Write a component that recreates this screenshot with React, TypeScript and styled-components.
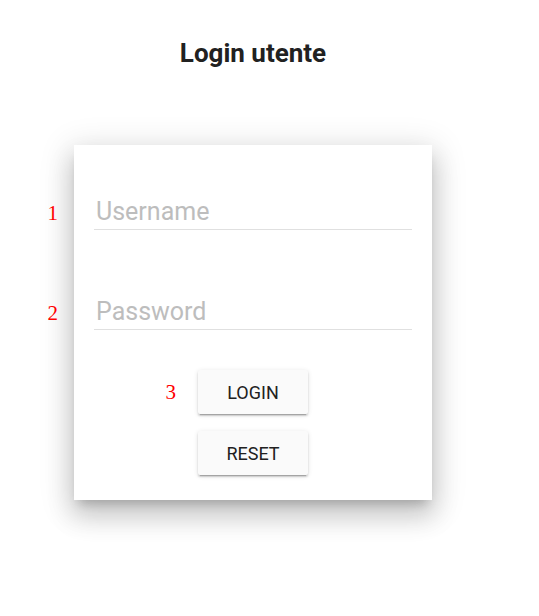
import React from "react";
import styled, { createGlobalStyle } from "styled-components";

const GlobalStyle = createGlobalStyle`
  html, body {
    margin: 0;
    background: #ffffff;
    font-family: Roboto, "Helvetica Neue", Arial, sans-serif;
  }
`;

export default function App() {
  return (
    <>
      <GlobalStyle />
      <Page>
        <Title>Login utente</Title>
        <Card>
          <Field>
            <Marker $gap={36}>1</Marker>
            <TextInput type="text" placeholder="Username" />
          </Field>
          <Field>
            <Marker $gap={36}>2</Marker>
            <TextInput type="password" placeholder="Password" />
          </Field>
          <Actions>
            <ButtonSlot>
              <Marker $gap={22}>3</Marker>
              <RaisedButton>LOGIN</RaisedButton>
            </ButtonSlot>
            <ButtonSlot>
              <RaisedButton>RESET</RaisedButton>
            </ButtonSlot>
          </Actions>
        </Card>
      </Page>
    </>
  );
}

const Page = styled.div`
  width: 506px;
  min-height: 616px;
  box-sizing: border-box;
  padding: 38px 0 80px;
  display: flex;
  flex-direction: column;
  align-items: center;
`;

const Title = styled.h2`
  margin: 0;
  font-size: 26px;
  line-height: 30px;
  font-weight: 700;
  color: #212121;
`;

const Card = styled.div`
  margin-top: 77px;
  width: 358px;
  box-sizing: border-box;
  padding: 50px 20px 25px;
  background: #ffffff;
  box-shadow: 0 16px 24px 2px rgba(0, 0, 0, 0.14),
    0 6px 30px 5px rgba(0, 0, 0, 0.12), 0 8px 10px -5px rgba(0, 0, 0, 0.2);
  display: flex;
  flex-direction: column;
  gap: 65px;
`;

const Field = styled.div`
  position: relative;
`;

const Marker = styled.span<{ $gap: number }>`
  position: absolute;
  top: 50%;
  right: calc(100% + ${(p) => p.$gap}px);
  transform: translateY(-50%);
  font-family: "Liberation Serif", "Times New Roman", serif;
  font-size: 21px;
  line-height: 1;
  color: #ff0000;
`;

const TextInput = styled.input`
  display: block;
  width: calc(100% - 2px);
  box-sizing: content-box;
  height: 34px;
  padding: 0 0 0 2px;
  margin: 0;
  border: none;
  border-bottom: 1px solid rgba(0, 0, 0, 0.12);
  outline: none;
  background: transparent;
  font-family: Roboto, Arial, sans-serif;
  font-size: 25px;
  line-height: 34px;
  color: #212121;

  &::placeholder {
    color: #bdbdbd;
  }
`;

const Actions = styled.div`
  margin-top: -25px;
  display: flex;
  flex-direction: column;
  align-items: center;
  gap: 17px;
`;

const ButtonSlot = styled.div`
  position: relative;
`;

const RaisedButton = styled.button`
  display: block;
  width: 110px;
  height: 44px;
  padding: 0;
  border: none;
  border-radius: 2px;
  background: #fafafa;
  color: #212121;
  font-family: Roboto, Arial, sans-serif;
  font-size: 18px;
  font-weight: 400;
  cursor: pointer;
  box-shadow: 0 2px 2px 0 rgba(0, 0, 0, 0.14),
    0 3px 1px -2px rgba(0, 0, 0, 0.2), 0 1px 5px 0 rgba(0, 0, 0, 0.12);
`;
